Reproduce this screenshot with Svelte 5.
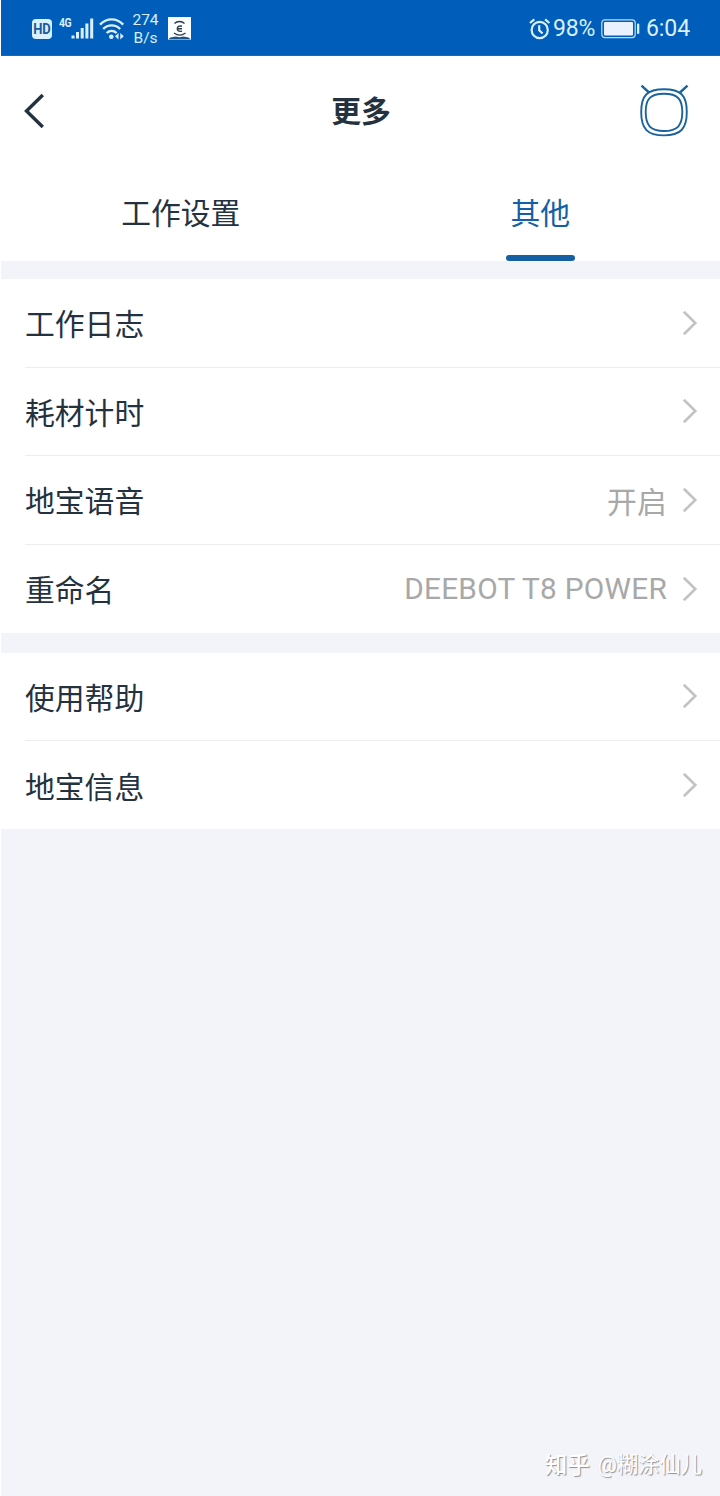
<script>
  const tabs = ['工作设置', '其他'];

  const groups = [
    [
      { label: '工作日志' },
      { label: '耗材计时' },
      { label: '地宝语音', value: '开启' },
      { label: '重命名', value: 'DEEBOT T8 POWER' }
    ],
    [{ label: '使用帮助' }, { label: '地宝信息' }]
  ];

  let active = $state(1);
</script>

<div class="page">
  <!-- STATUS BAR -->
  <div class="status">
    <span class="hd"><span>HD</span></span>
    <span class="net"><span>4G</span></span>
    <svg class="signal" width="23" height="21" viewBox="0 0 23 21" fill="#d9f0ff" aria-hidden="true">
      <rect x="0.5" y="17.5" width="3" height="3" />
      <rect x="5" y="14" width="3" height="6.5" />
      <rect x="9.7" y="10" width="3" height="10.5" />
      <rect x="14.4" y="5.5" width="3" height="15" />
      <rect x="19.2" y="0.5" width="3" height="20" />
    </svg>
    <svg class="wifi" width="27" height="22" viewBox="0 0 27 22" aria-hidden="true">
      <g fill="none" stroke="#d9f0ff" stroke-width="2.4">
        <path d="M1 6.600C7.500-.4 17.700-.4 24.200 6.600" />
        <path d="M4.200 11c4.700-4.900 12.200-4.900 16.900 0" />
        <path d="M7.700 15c2.900-2.800 7-2.800 9.900 0" />
      </g>
      <circle cx="12.300" cy="18.700" r="2.300" fill="#d9f0ff" />
      <path d="M19.500 15v6.500L16 18.250zM21.300 15v6.500l3.500-3.250z" fill="#d9f0ff" />
    </svg>
    <span class="speed"><span>274</span><span>B/s</span></span>
    <svg class="app" width="23" height="23" viewBox="0 0 23 23" aria-hidden="true">
      <rect width="23" height="23" fill="#fbfeff" />
      <g fill="none" stroke="#2b3a48">
        <path d="M6.500 6.500c2.500-2.700 7.500-2.700 10 0" stroke-width="1.300" />
        <path d="M14 9.300c-3-.8-4.700.4-4.700 2.400s1.700 3.200 4.700 2.400M9.500 11.700H14" stroke-width="1.400" />
        <path d="M6 16c3.500 2.500 8 2.500 11.500 0" stroke-width="1.300" />
      </g>
      <path d="M0 22.500l2.500-2 5-1 4 .8 4-.8 5 1 2.500 2z" fill="#1d5385" />
    </svg>

    <svg class="alarm" width="22" height="22" viewBox="0 0 22 22" fill="none" stroke="#d9f0ff" stroke-width="2.200" aria-hidden="true">
      <circle cx="10.700" cy="12" r="8.100" />
      <path d="M10.200 7.300v5l3.400 3.200M1 5l4.300-3.600M20.400 5l-4.300-3.600" />
    </svg>
    <span class="percent">98%</span>
    <svg class="battery" width="39" height="20" viewBox="0 0 39 20" aria-hidden="true">
      <rect x="0.800" y="0.800" width="33.400" height="17.800" rx="3" fill="none" stroke="#b9dcfa" stroke-width="1.200" />
      <rect x="3" y="3" width="29" height="13.400" rx="1" fill="#e9f1ff" />
      <rect x="36" y="4.500" width="2.300" height="10.500" rx="1" fill="#d9f0ff" />
    </svg>
    <span class="clock">6:04</span>
  </div>

  <!-- TITLE BAR -->
  <header>
    <button class="back" aria-label="返回">
      <svg width="24" height="36" viewBox="0 0 24 36" fill="none" stroke="#24323f" stroke-width="3.400">
        <path d="M20.800 2L4.500 18l16.300 16" />
      </svg>
    </button>
    <h1>更多</h1>
    <button class="robot" aria-label="地宝">
      <svg width="50" height="54" viewBox="0 0 50 54" fill="none" stroke="#1a639c">
        <path d="M25 5.200c16.500 0 22.800 6 22.800 22.800S41.500 51.400 25 51.400 2.200 45 2.200 28 8.500 5.200 25 5.200z" stroke-width="1.900" />
        <path d="M25 9.800c13.500 0 18.300 5 18.300 18.300S38.500 47 25 47 6.700 41.500 6.700 28.100 11.500 9.800 25 9.800z" stroke-width="1.900" />
        <path d="M2.500 1.700l7.500 6.800M48.500 1.700L41 8.500" stroke-width="2.400" />
      </svg>
    </button>
  </header>

  <nav>
    {#each tabs as tab, i}
      <button class="tab" class:active={active === i} onclick={() => (active = i)}>
        <span class="tab-label">{tab}</span>
        <span class="bar"></span>
      </button>
    {/each}
  </nav>

  <!-- SETTINGS -->
  <main>
    {#each groups as group}
      <section>
        {#each group as row}
          <div class="row">
            <span class="label">{row.label}</span>
            {#if row.value}
              <span class="value">{row.value}</span>
            {/if}
            <svg class="chevron" width="16" height="26" viewBox="0 0 16 26" fill="none" stroke="#c3c3c3" stroke-width="2.600">
              <path d="M1.800 1.800L13.300 13 1.800 24.200" />
            </svg>
          </div>
        {/each}
      </section>
    {/each}
  </main>

  <footer>
    <span class="brand">知乎</span>
    <span>@糊涂仙儿</span>
  </footer>
</div>

<style>
  :global(body) {
    margin: 0;
    background: #fff;
  }

  .page {
    box-sizing: border-box;
    width: 720px;
    height: 1496px;
    border-left: 1px solid #fff;
    display: flex;
    flex-direction: column;
    background: #f2f4f9;
    color: #24323f;
    font-family: Roboto, 'Noto Sans CJK SC', sans-serif;
    overflow: hidden;
  }

  button {
    padding: 0;
    border: 0;
    background: none;
    color: inherit;
    font: inherit;
    cursor: pointer;
  }

  svg {
    display: block;
    flex: none;
  }

  /* Status bar */
  .status {
    box-sizing: border-box;
    flex: none;
    display: flex;
    align-items: center;
    height: 56px;
    padding: 2px 30px 0 31px;
    border-bottom: 1px solid #1b68ae;
    background: #005eba;
    color: #d9f0ff;
    white-space: nowrap;
  }

  .hd {
    width: 20px;
    height: 20px;
    border-radius: 4px;
    background: #d9f0ff;
    color: #1a5a9c;
    font-size: 13px;
    font-weight: 700;
    line-height: 20px;
    text-align: center;
  }

  .hd span {
    display: block;
    transform: scaleY(1.15);
  }

  .net {
    width: 12px;
    margin: 0 0 12px 7px;
    font-size: 11px;
    font-weight: 700;
    line-height: 12px;
    letter-spacing: -0.5px;
  }

  .net span {
    display: block;
    transform: scale(0.95, 1.2);
    transform-origin: 0 50%;
  }

  .wifi { margin-left: 5px; }

  .speed {
    display: flex;
    flex-direction: column;
    align-items: center;
    width: 27px;
    margin: 1px 0 0 6px;
    font-size: 15.5px;
    line-height: 18px;
  }

  .app { margin-left: 9px; }
  .alarm { margin-left: auto; }

  .percent {
    margin-left: 2px;
    font-size: 23px;
    letter-spacing: -0.2px;
  }

  .battery { margin-left: 6px; }

  .clock {
    margin-left: 6px;
    font-size: 23px;
    letter-spacing: -0.1px;
  }

  /* Title bar */
  header {
    box-sizing: border-box;
    flex: none;
    display: grid;
    grid-template-columns: 50px 1fr 50px;
    align-items: center;
    height: 110px;
    padding: 0 31px 0 21px;
    background: #fff;
  }

  h1 {
    margin: 2px 0 0 11px;
    font-size: 29.8px;
    font-weight: 700;
    line-height: 40px;
    text-align: center;
  }

  .back { justify-self: start; }

  /* Tabs */
  nav {
    flex: none;
    display: grid;
    grid-template-columns: 1fr 1fr;
    height: 95px;
    background: #fff;
  }

  .tab {
    display: flex;
    flex-direction: column;
    align-items: center;
    justify-content: space-between;
    font-size: 29.8px;
  }

  .tab-label {
    margin-top: 26px;
    line-height: 44px;
  }

  .bar {
    width: 69px;
    height: 6px;
    border-radius: 3px;
  }

  .active { color: #1560a4; }
  .active .bar { background: #1560a4; }

  /* Lists */
  main {
    display: flex;
    flex-direction: column;
    gap: 20px;
    padding-top: 18px;
  }

  section {
    background: #fff;
  }

  .row {
    box-sizing: border-box;
    display: flex;
    align-items: center;
    height: 88.6px;
    margin-left: 24px;
    padding-right: 22px;
    border-bottom: 1px solid #ededf0;
    font-size: 29.8px;
  }

  .row:last-child {
    height: 87.8px;
    border-bottom: 0;
  }

  .label {
    margin-right: auto;
    padding-bottom: 1px;
  }

  .value {
    color: #a8a8a8;
    letter-spacing: 0.25px;
  }

  .chevron { margin-left: 15px; }

  /* Watermark */
  footer {
    display: flex;
    justify-content: flex-end;
    gap: 8px;
    margin-top: auto;
    padding: 0 18px 15px 0;
    color: #fff;
    font-size: 21.3px;
    line-height: 32px;
    text-shadow: 1px 1px 1px #8d8f94;
  }

  .brand {
    font-size: 22.5px;
    font-weight: 500;
  }
</style>
